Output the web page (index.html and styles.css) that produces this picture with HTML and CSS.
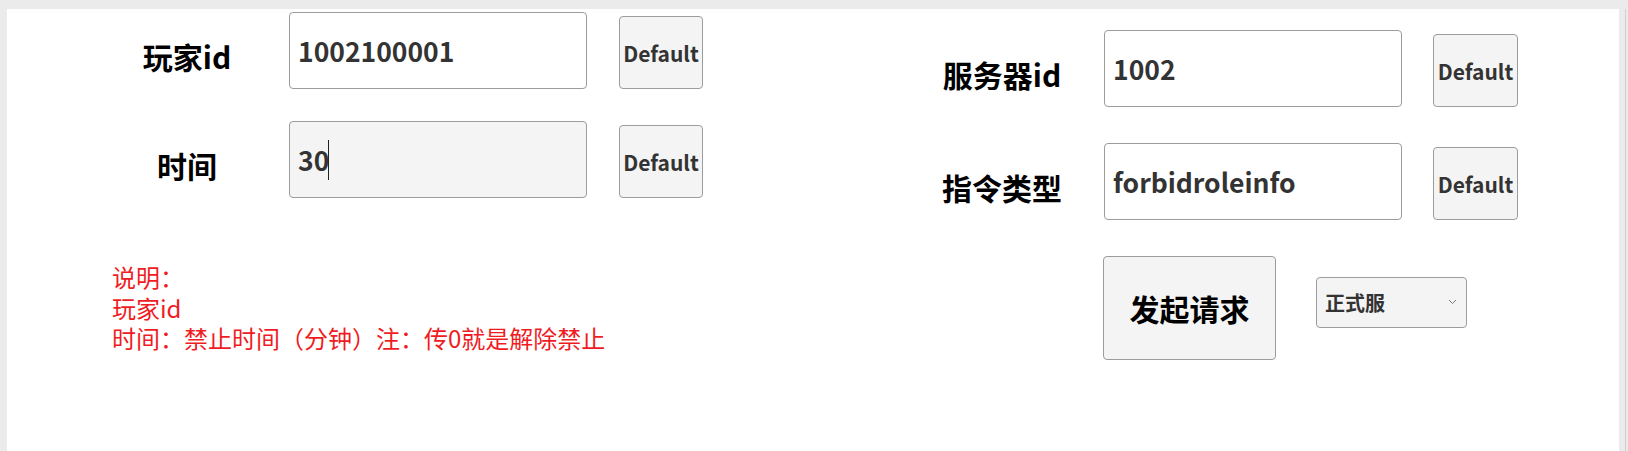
FILE: index.html
```html
<!DOCTYPE html>
<html lang="zh-CN">
<head>
<meta charset="utf-8">
<title>禁止角色</title>
<link rel="stylesheet" href="styles.css">
</head>
<body>
<div class="page">
  <div class="col col-left">
    <div class="row">
      <div class="label">玩家id</div>
      <input class="field" type="text" value="1002100001">
      <button class="btn-default">Default</button>
    </div>
    <div class="row row-gap">
      <div class="label">时间</div>
      <div class="field-wrap">
        <input class="field field-active" type="text" value="30">
        <span class="caret"></span>
      </div>
      <button class="btn-default">Default</button>
    </div>
    <div class="desc">
      <div>说明：</div>
      <div>玩家id</div>
      <div>时间：禁止时间（分钟）注：传0就是解除禁止</div>
    </div>
  </div>
  <div class="col col-right">
    <div class="row">
      <div class="label">服务器id</div>
      <input class="field" type="text" value="1002">
      <button class="btn-default btn-right">Default</button>
    </div>
    <div class="row row-gap-right">
      <div class="label">指令类型</div>
      <input class="field" type="text" value="forbidroleinfo">
      <button class="btn-default btn-right">Default</button>
    </div>
    <div class="actions">
      <button class="btn-submit">发起请求</button>
      <div class="select-wrap">
        <select class="select">
          <option>正式服</option>
          <option>测试服</option>
        </select>
        <svg class="chevron" width="9" height="6" viewBox="0 0 9 6"><path d="M1 1 L4.5 4.5 L8 1" fill="none" stroke="#777" stroke-width="1"/></svg>
      </div>
    </div>
  </div>
  <div class="scroll-gap"></div>
</div>
</body>
</html>
```

FILE: styles.css
```css
html, body {
  margin: 0;
  padding: 0;
}
body {
  background: #ebebeb;
  width: 1628px;
  height: 451px;
  overflow: hidden;
  font-family: "Noto Sans CJK SC", "Noto Sans", sans-serif;
}
.page {
  display: flex;
  margin-top: 9px;
  height: 442px;
}
.col-left {
  margin-left: 7px;
  width: 815px;
  padding-left: 78px;
  padding-top: 3px;
  background: #fff;
}
.col-right {
  width: 719px;
  padding-top: 21px;
  background: #fff;
}
.scroll-gap {
  width: 6px;
  border-right: 1px solid #cfcfcf;
}
.row {
  display: flex;
  align-items: flex-end;
  height: 77px;
}
.row-gap {
  margin-top: 32px;
}
.row-gap-right {
  margin-top: 36px;
}
.label {
  width: 204px;
  text-align: center;
  font-size: 30px;
  font-weight: 700;
  line-height: 40px;
  color: #000;
  margin-bottom: 13px;
}
.field-wrap {
  position: relative;
  display: flex;
}
.field {
  box-sizing: border-box;
  width: 298px;
  height: 77px;
  border: 1px solid #9c9c9c;
  border-radius: 4px;
  padding: 0 8px;
  background: #fff;
  font-family: "Noto Sans CJK SC", "Noto Sans", sans-serif;
  font-size: 26.5px;
  font-weight: 700;
  color: #333;
  outline: none;
}
.field-active {
  background: #f4f4f4;
}
.caret {
  position: absolute;
  left: 39px;
  top: 19px;
  width: 1px;
  height: 40px;
  background: #222;
}
.btn-default {
  box-sizing: border-box;
  margin-left: 32px;
  width: 84px;
  height: 73px;
  padding: 0;
  border: 1px solid #9c9c9c;
  border-radius: 4px;
  background: #f4f4f4;
  font-family: "Noto Sans CJK SC", "Noto Sans", sans-serif;
  font-size: 21px;
  font-weight: 700;
  color: #333;
}
.btn-right {
  margin-left: 31px;
  width: 85px;
}
.desc {
  margin-top: 64px;
  margin-left: 27px;
  font-size: 24px;
  line-height: 30.5px;
  color: #f01c24;
}
.actions {
  display: flex;
  align-items: flex-start;
  margin-top: 36px;
  padding-left: 203px;
}
.btn-submit {
  box-sizing: border-box;
  width: 173px;
  height: 104px;
  padding: 0;
  border: 1px solid #9c9c9c;
  border-radius: 4px;
  background: #f4f4f4;
  font-family: "Noto Sans CJK SC", "Noto Sans", sans-serif;
  font-size: 30px;
  font-weight: 700;
  color: #000;
}
.select-wrap {
  position: relative;
  margin-left: 40px;
  margin-top: 21px;
}
.select {
  box-sizing: border-box;
  width: 151px;
  height: 51px;
  border: 1px solid #9c9c9c;
  border-radius: 4px;
  background: #f4f4f4;
  padding: 0 0 0 8px;
  font-family: "Noto Sans CJK SC", "Noto Sans", sans-serif;
  font-size: 20px;
  font-weight: 700;
  color: #333;
  appearance: none;
  -webkit-appearance: none;
  outline: none;
}
.chevron {
  position: absolute;
  left: 132px;
  top: 22px;
  pointer-events: none;
}
```
